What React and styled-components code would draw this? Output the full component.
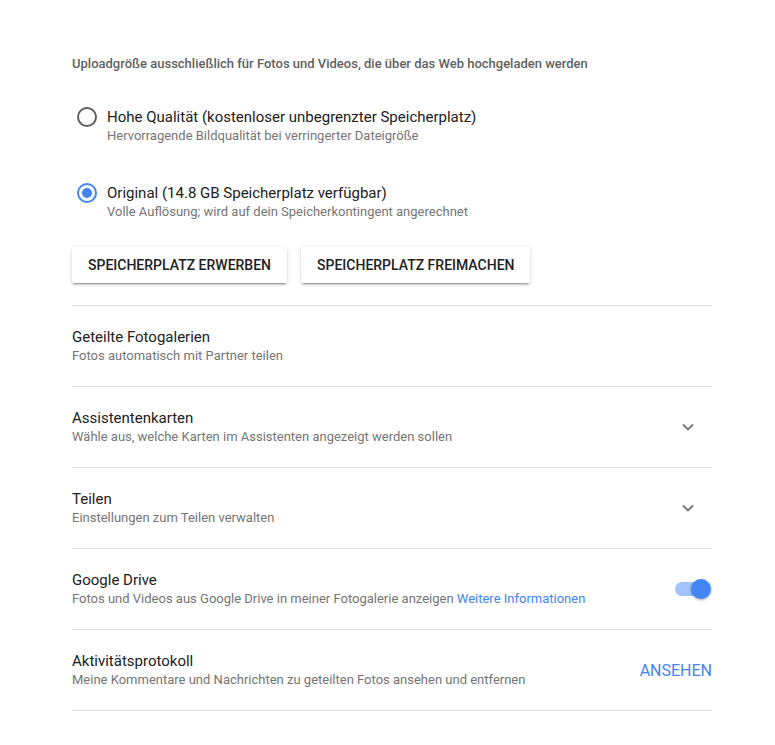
import React from "react";
import styled, { createGlobalStyle } from "styled-components";

const Global = createGlobalStyle`
  html, body { margin: 0; padding: 0; background: #fff; }
  body { font-family: Roboto, "Noto Sans", Arial, sans-serif; -webkit-font-smoothing: antialiased; }
`;

const Page = styled.div`
  width: 640px;
  padding: 56px 0 0 72px;
`;

const Heading = styled.div`
  font-size: 13px;
  font-weight: 500;
  color: #616161;
  line-height: 16px;
`;

const RadioGroup = styled.div`
  display: flex;
  flex-direction: column;
  gap: 38px;
  margin-top: 35px;
`;

const RadioOption = styled.label`
  display: flex;
  align-items: flex-start;
  gap: 10px;
  margin-left: 5px;
`;

const RadioCircle = styled.span`
  box-sizing: border-box;
  width: 20px;
  height: 20px;
  border-radius: 50%;
  border: 2px solid ${(p) => (p.$checked ? "#4285f4" : "#5f5f5f")};
  display: flex;
  align-items: center;
  justify-content: center;
  flex-shrink: 0;
  &::after {
    content: "";
    width: 10px;
    height: 10px;
    border-radius: 50%;
    background: #4285f4;
    display: ${(p) => (p.$checked ? "block" : "none")};
  }
`;

const TextBlock = styled.div`
  display: flex;
  flex-direction: column;
`;

const Title = styled.div`
  font-size: 15px;
  line-height: 20px;
  color: #212121;
`;

const Sub = styled.div`
  font-size: 13px;
  line-height: 18px;
  color: #757575;
`;

const Link = styled.a`
  color: #4285f4;
  text-decoration: none;
`;

const ButtonRow = styled.div`
  display: flex;
  gap: 14px;
  margin-top: 26px;
`;

const RaisedButton = styled.button`
  font-family: inherit;
  height: 36px;
  padding: 0 16px;
  border: none;
  border-radius: 2px;
  background: #fff;
  color: #212121;
  font-size: 14px;
  font-weight: 500;
  text-transform: uppercase;
  box-shadow: 0 2px 2px 0 rgba(0,0,0,0.14), 0 1px 5px 0 rgba(0,0,0,0.12), 0 3px 1px -2px rgba(0,0,0,0.2);
`;

const List = styled.div`
  margin-top: 22px;
  border-top: 1px solid #e0e0e0;
`;

const Row = styled.div`
  display: flex;
  align-items: center;
  justify-content: space-between;
  padding: 21px 0;
  border-bottom: 1px solid #e0e0e0;
`;

const Chevron = styled.svg`
  width: 14px;
  height: 14px;
  margin-right: 17px;
`;

const Toggle = styled.div`
  position: relative;
  width: 36px;
  height: 20px;
  margin-right: 1px;
  &::before {
    content: "";
    position: absolute;
    left: 0;
    top: 3px;
    width: 34px;
    height: 14px;
    border-radius: 7px;
    background: #a1c2fa;
  }
  &::after {
    content: "";
    position: absolute;
    right: 0;
    top: 0;
    width: 20px;
    height: 20px;
    border-radius: 50%;
    background: #4285f4;
    box-shadow: 0 1px 3px rgba(0,0,0,0.35);
  }
`;

const FlatButton = styled.span`
  font-size: 16px;
  font-weight: 400;
  color: #4285f4;
  text-transform: uppercase;
`;

const ChevronIcon = () => (
  <Chevron viewBox="0 0 14 14">
    <path d="M2 4.5 L7 9.5 L12 4.5" fill="none" stroke="#757575" strokeWidth="1.8" />
  </Chevron>
);

export default function App() {
  return (
    <>
      <Global />
      <Page>
        <Heading>Uploadgröße ausschließlich für Fotos und Videos, die über das Web hochgeladen werden</Heading>
        <RadioGroup>
          <RadioOption>
            <RadioCircle />
            <TextBlock>
              <Title>Hohe Qualität (kostenloser unbegrenzter Speicherplatz)</Title>
              <Sub>Hervorragende Bildqualität bei verringerter Dateigröße</Sub>
            </TextBlock>
          </RadioOption>
          <RadioOption>
            <RadioCircle $checked />
            <TextBlock>
              <Title>Original (14.8 GB Speicherplatz verfügbar)</Title>
              <Sub>Volle Auflösung; wird auf dein Speicherkontingent angerechnet</Sub>
            </TextBlock>
          </RadioOption>
        </RadioGroup>
        <ButtonRow>
          <RaisedButton>Speicherplatz erwerben</RaisedButton>
          <RaisedButton>Speicherplatz freimachen</RaisedButton>
        </ButtonRow>
        <List>
          <Row>
            <TextBlock>
              <Title>Geteilte Fotogalerien</Title>
              <Sub>Fotos automatisch mit Partner teilen</Sub>
            </TextBlock>
          </Row>
          <Row>
            <TextBlock>
              <Title>Assistentenkarten</Title>
              <Sub>Wähle aus, welche Karten im Assistenten angezeigt werden sollen</Sub>
            </TextBlock>
            <ChevronIcon />
          </Row>
          <Row>
            <TextBlock>
              <Title>Teilen</Title>
              <Sub>Einstellungen zum Teilen verwalten</Sub>
            </TextBlock>
            <ChevronIcon />
          </Row>
          <Row>
            <TextBlock>
              <Title>Google Drive</Title>
              <Sub>
                Fotos und Videos aus Google Drive in meiner Fotogalerie anzeigen <Link>Weitere Informationen</Link>
              </Sub>
            </TextBlock>
            <Toggle />
          </Row>
          <Row>
            <TextBlock>
              <Title>Aktivitätsprotokoll</Title>
              <Sub>Meine Kommentare und Nachrichten zu geteilten Fotos ansehen und entfernen</Sub>
            </TextBlock>
            <FlatButton>Ansehen</FlatButton>
          </Row>
        </List>
      </Page>
    </>
  );
}
